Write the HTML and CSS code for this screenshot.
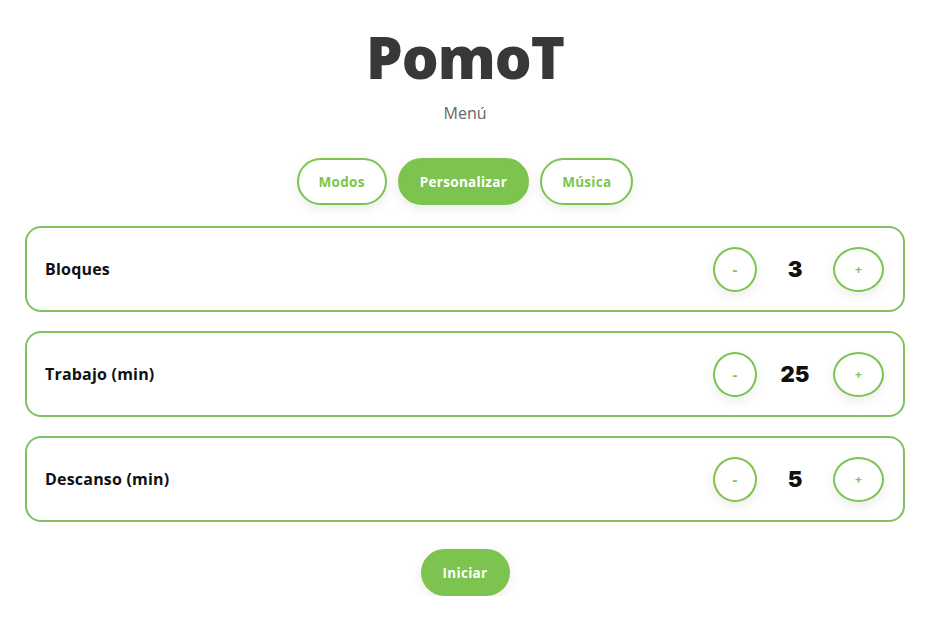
FILE: index.html
```html
<!DOCTYPE html>
<html lang="es">
<head>
<meta charset="utf-8">
<title>PomoT</title>
<link rel="stylesheet" href="styles.css">
</head>
<body>
<main class="app">
  <h1 class="title">PomoT</h1>
  <p class="subtitle">Menú</p>
  <nav class="tabs">
    <button class="tab">Modos</button>
    <button class="tab tab-active">Personalizar</button>
    <button class="tab">Música</button>
  </nav>
  <section class="settings">
    <div class="card">
      <span class="label">Bloques</span>
      <div class="stepper">
        <button class="step step-minus">-</button>
        <span class="value">3</span>
        <button class="step step-plus">+</button>
      </div>
    </div>
    <div class="card">
      <span class="label">Trabajo (min)</span>
      <div class="stepper">
        <button class="step step-minus">-</button>
        <span class="value">25</span>
        <button class="step step-plus">+</button>
      </div>
    </div>
    <div class="card">
      <span class="label">Descanso (min)</span>
      <div class="stepper">
        <button class="step step-minus">-</button>
        <span class="value">5</span>
        <button class="step step-plus">+</button>
      </div>
    </div>
  </section>
  <div class="actions">
    <button class="start">Iniciar</button>
  </div>
</main>
</body>
</html>
```
FILE: styles.css
```css
* { box-sizing: border-box; }
html, body { margin: 0; padding: 0; background: #ffffff; }
body {
  font-family: "Open Sans", "Noto Sans", sans-serif;
  color: #111;
}
.app {
  padding: 22px 33px 0 25px;
  display: flex;
  flex-direction: column;
  align-items: center;
}
.title {
  margin: 0;
  font-size: 58px;
  font-weight: 800;
  line-height: 70px;
  color: #383838;
  letter-spacing: -1px;
}
.subtitle {
  margin: 10px 0 0;
  font-size: 16px;
  line-height: 22px;
  color: #666;
}
.tabs {
  display: flex;
  gap: 11px;
  margin-top: 34px;
}
.tab {
  font-family: inherit;
  height: 47px;
  padding: 0 20px;
  border: 2px solid #7cc44f;
  border-radius: 24px;
  background: #fff;
  color: #7cc44f;
  font-size: 13.5px;
  font-weight: 700;
  letter-spacing: 0.3px;
  box-shadow: 0 4px 12px rgba(0,0,0,0.08);
}
.tab-active {
  background: #7cc44f;
  color: #fff;
}
.settings {
  align-self: stretch;
  display: flex;
  flex-direction: column;
  gap: 19px;
  margin-top: 21px;
}
.card {
  height: 86px;
  border: 2px solid #80c25e;
  border-radius: 16px;
  display: flex;
  align-items: center;
  justify-content: space-between;
  padding: 0 19px 0 18px;
}
.label {
  font-size: 16px;
  font-weight: 700;
  letter-spacing: 0.2px;
  color: #111;
}
.stepper {
  display: flex;
  align-items: center;
}
.step {
  font-family: inherit;
  height: 45px;
  border: 2px solid #7cc44f;
  border-radius: 50%;
  background: #fff;
  color: #7cc44f;
  font-weight: 700;
  box-shadow: 0 4px 12px rgba(0,0,0,0.08);
  padding: 0;
}
.step-minus { width: 44px; font-size: 15px; }
.step-plus { width: 51px; font-size: 12px; }
.value {
  width: 76px;
  text-align: center;
  font-family: "Inter", sans-serif;
  font-size: 22px;
  font-weight: 900;
  color: #111;
}
.actions {
  margin-top: 27px;
}
.start {
  font-family: inherit;
  height: 47px;
  width: 89px;
  border: none;
  border-radius: 24px;
  background: #7cc44f;
  color: #fff;
  font-size: 13.5px;
  font-weight: 700;
  letter-spacing: 0.3px;
  box-shadow: 0 4px 12px rgba(0,0,0,0.08);
}
```
